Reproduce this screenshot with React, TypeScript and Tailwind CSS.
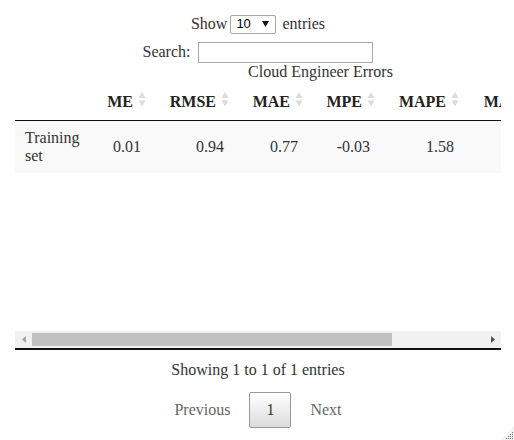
import * as React from "react"

type Col = { key: string; label: string; width: number }

const cols: Col[] = [
  { key: "name", label: "", width: 74 },
  { key: "ME", label: "ME", width: 62 },
  { key: "RMSE", label: "RMSE", width: 83 },
  { key: "MAE", label: "MAE", width: 74 },
  { key: "MPE", label: "MPE", width: 72 },
  { key: "MAPE", label: "MAPE", width: 84 },
  { key: "MASE", label: "MASE", width: 84 },
  { key: "ACF1", label: "ACF1", width: 78 },
]

const row: Record<string, string> = {
  name: "Training set",
  ME: "0.01",
  RMSE: "0.94",
  MAE: "0.77",
  MPE: "-0.03",
  MAPE: "1.58",
  MASE: "0.71",
  ACF1: "0.02",
}

const tableWidth = cols.reduce((s, c) => s + c.width, 0)

function SortBoth() {
  return (
    <svg width="8" height="15" viewBox="0 0 8 15" className="absolute right-[5px] top-[11px]">
      <path d="M4 0 L7.5 6 L0.5 6 Z" fill="#dcdcdc" />
      <path d="M0.5 8.5 L7.5 8.5 L4 14.5 Z" fill="#dcdcdc" />
    </svg>
  )
}

function Colgroup() {
  return (
    <colgroup>
      {cols.map((c) => (
        <col key={c.key} style={{ width: c.width }} />
      ))}
    </colgroup>
  )
}

function ResizeGrip() {
  const dots: [number, number][] = []
  for (let r = 0; r < 4; r++) {
    for (let c = 3 - r; c < 4; c++) dots.push([c * 2, r * 2])
  }
  return (
    <svg width="14" height="14" viewBox="0 0 14 14" className="absolute bottom-0 right-0">
      <path d="M14 0 L14 14 L0 14 Z" fill="#f4f4f4" />
      {dots.map(([x, y], i) => (
        <rect key={i} x={6 + x} y={6 + y} width="1" height="1" fill="#6b6b6b" />
      ))}
    </svg>
  )
}

export default function App() {
  return (
    <div className="relative h-[440px] w-[514px] overflow-hidden bg-white font-['Liberation_Serif',serif] text-[16px] leading-[18px] text-[#333]">
      <div className="ml-[15px] w-[486px]">
        {/* length menu */}
        <div className="mt-[14px] flex h-[20px] items-center justify-center">
          <span>Show</span>
          <div className="ml-[3px] mr-[6px] flex h-[19px] w-[46px] items-center rounded-[2px] border border-[#a6a6a6] bg-white pl-[5px] pr-[6px] font-['Liberation_Sans',sans-serif] text-[13px] text-black">
            <span className="flex-1">10</span>
            <svg width="7" height="6" viewBox="0 0 7 6">
              <path d="M0 0 L7 0 L3.5 6 Z" fill="#111" />
            </svg>
          </div>
          <span>entries</span>
        </div>

        {/* filter */}
        <div className="mt-[7px] flex h-[22px] items-center justify-center">
          <label className="flex items-center">
            Search:
            <input
              type="search"
              className="ml-[8px] h-[21px] w-[175px] border border-[#a9a9a9] bg-transparent px-[2px] outline-none"
            />
          </label>
        </div>

        {/* scrolling table */}
        <div className="w-[486px] overflow-hidden">
          <div style={{ width: tableWidth }}>
            <div className="h-[18px] text-center">Cloud Engineer Errors</div>
            <table className="table-fixed border-collapse" style={{ width: tableWidth }}>
              <Colgroup />
              <thead>
                <tr>
                  {cols.map((c) => (
                    <th
                      key={c.key}
                      className="relative h-[39px] border-b border-[#111] pb-[8px] pl-[10px] pr-[18px] pt-[12px] text-right align-middle font-bold text-[#222]"
                    >
                      {c.label}
                      {c.label ? <SortBoth /> : null}
                    </th>
                  ))}
                </tr>
              </thead>
            </table>
            <div className="h-[210px]">
              <table className="table-fixed border-collapse" style={{ width: tableWidth }}>
                <Colgroup />
                <tbody>
                  <tr className="bg-[#f9f9f9]">
                    {cols.map((c) => (
                      <td
                        key={c.key}
                        className={
                          c.key === "name"
                            ? "h-[52px] px-[10px] py-[8px] text-left align-middle"
                            : "h-[52px] px-[10px] py-[8px] text-right align-middle"
                        }
                      >
                        {row[c.key]}
                      </td>
                    ))}
                  </tr>
                </tbody>
              </table>
            </div>
          </div>

          {/* horizontal scrollbar */}
          <div className="flex h-[17px] bg-[#f1f1f1]">
            <div className="flex w-[17px] items-center justify-center">
              <svg width="4" height="7" viewBox="0 0 4 7">
                <path d="M4 0 L4 7 L0 3.5 Z" fill="#a3a3a3" />
              </svg>
            </div>
            <div className="flex flex-1 items-center">
              <div className="h-[13px] w-[360px] bg-[#c1c1c1]" />
            </div>
            <div className="flex w-[17px] items-center justify-center">
              <svg width="4" height="7" viewBox="0 0 4 7">
                <path d="M0 0 L4 3.5 L0 7 Z" fill="#505050" />
              </svg>
            </div>
          </div>
          <div className="h-[2px] bg-[#111]" />
        </div>

        {/* info */}
        <div className="mt-[11px] h-[18px] text-center">Showing 1 to 1 of 1 entries</div>

        {/* pagination */}
        <div className="mt-[13px] flex justify-center">
          <span className="border border-transparent px-[16px] py-[8px] text-[#666]">Previous</span>
          <span className="ml-[2px] min-w-[24px] rounded-[2px] border border-[#979797] bg-gradient-to-b from-white to-[#dcdcdc] px-[16px] py-[8px] text-center text-[#333]">
            1
          </span>
          <span className="ml-[2px] border border-transparent px-[16px] py-[8px] text-[#666]">Next</span>
        </div>
      </div>
      <ResizeGrip />
    </div>
  )
}
